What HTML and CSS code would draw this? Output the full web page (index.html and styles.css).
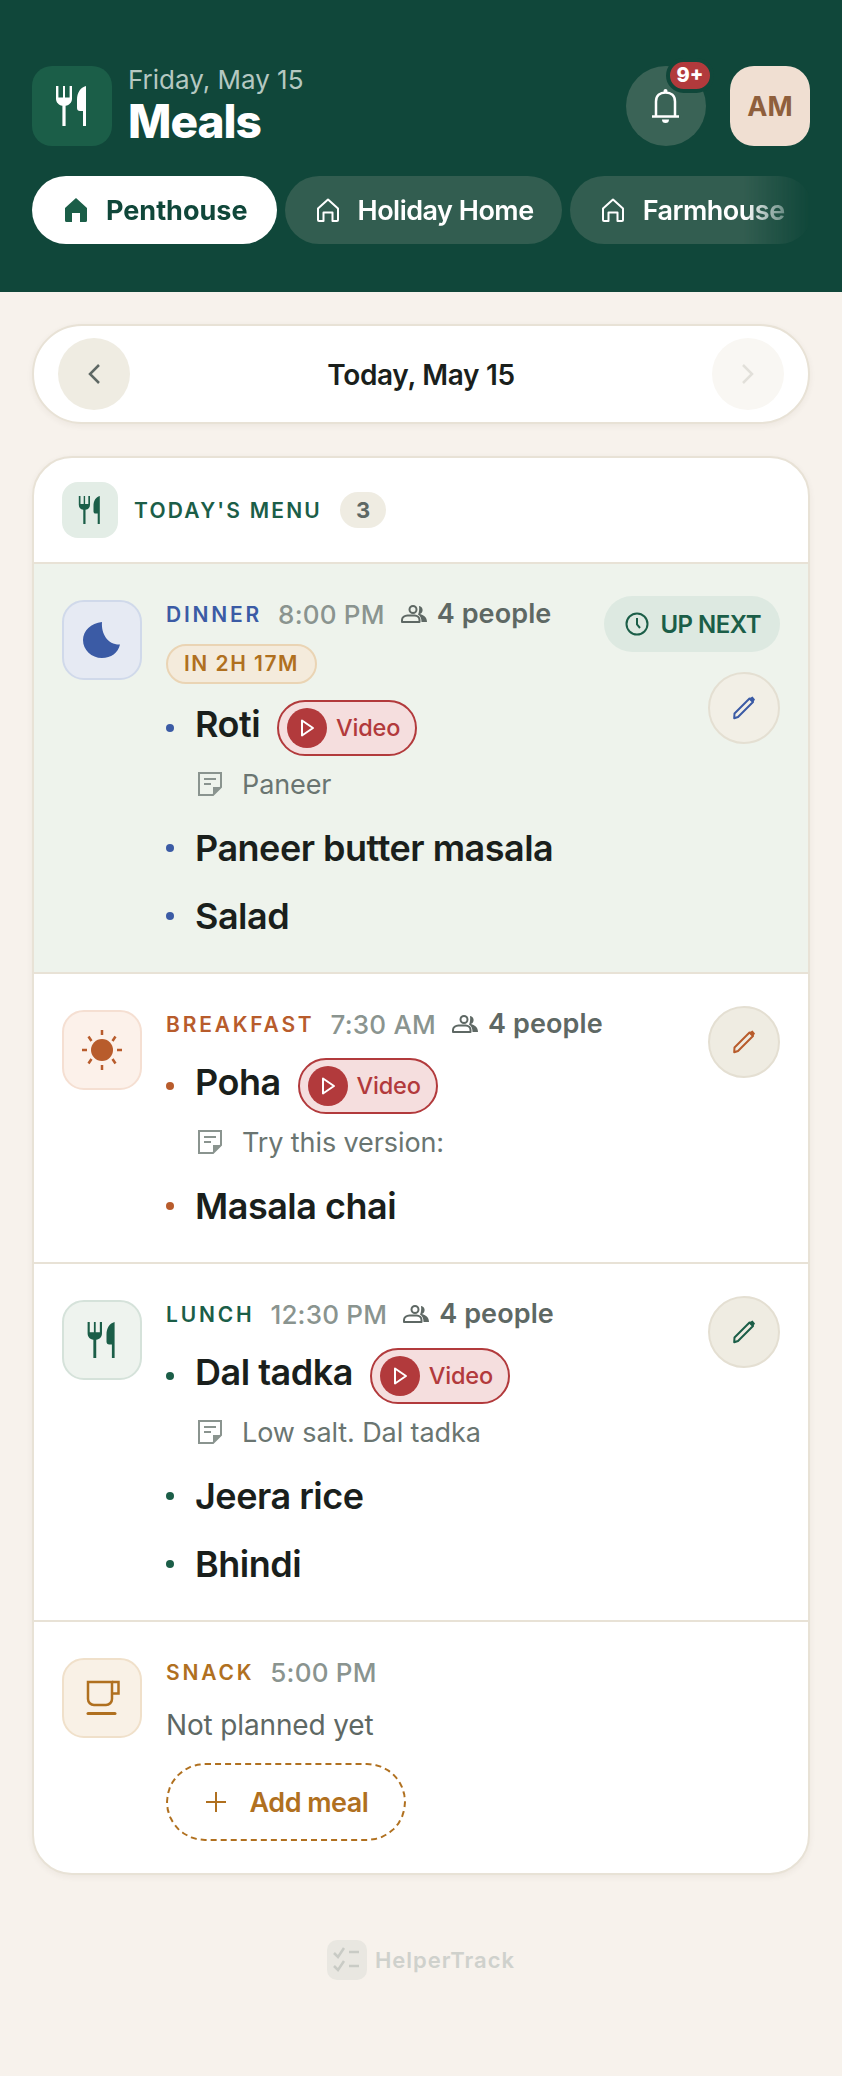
FILE: index.html
```html
<!DOCTYPE html>
<html lang="en">

<head>
    <meta charset="UTF-8">
    <meta name="viewport" content="width=device-width, initial-scale=1.0">
    <title>Meals</title>
    <link rel="stylesheet" href="styles.css">
</head>

<body>

    <!-- ICON SPRITE -->
    <svg class="sprite" xmlns="http://www.w3.org/2000/svg">
        <symbol id="i-cutlery" viewBox="0 0 40 40">
            <path fill="currentColor" d="M4 0h2.4v11.5H11V0h2v11.5h4.6V0H20v12.5c0 4-2.6 6.6-6.4 7.2V40h-3.2V19.7C6.600 19.100 4 16.500 4 12.500zM34 0v40h-3V25h-3c-1.900 0-3-1.200-3-3v-8C25 6.500 28.500 1.500 34 0z" />
        </symbol>
        <symbol id="i-home" viewBox="0 0 24 24">
            <path fill="none" stroke="currentColor" stroke-width="2" stroke-linejoin="round" d="M2 10.500 12 1.500l10 9V22a1 1 0 0 1-1 1h-4.500v-8.500h-9V23H3a1 1 0 0 1-1-1z" />
        </symbol>
        <symbol id="i-home-fill" viewBox="0 0 24 24">
            <path fill="currentColor" d="M1 10 12 0l11 10v12.500a1.500 1.500 0 0 1-1.500 1.500H16v-9H8v9H2.500A1.500 1.500 0 0 1 1 22.500z" />
        </symbol>
        <symbol id="i-pencil" viewBox="0 0 24 24">
            <path fill="none" stroke="currentColor" stroke-width="2" stroke-linejoin="round" d="M2.500 17.500 17.500 2.500l3.500 3.500-15 15-3.800 1.200z" />
            <path fill="currentColor" d="M17 2.500 20.500 .5 23 3.500 21 6.500z" />
        </symbol>
        <symbol id="i-people" viewBox="0 0 26 18">
            <circle cx="12" cy="4.500" r="3.500" fill="none" stroke="currentColor" stroke-width="2" />
            <path fill="none" stroke="currentColor" stroke-width="2" stroke-linejoin="round" d="M1 17v-2c0-2.500 2.500-4.500 5.500-4.500h7c3 0 5 2 5 4.500v2z" />
            <path fill="currentColor" d="M18 1c3 .5 4 3 3.500 5-.3 1.500-1.300 2.500-2.500 3 3.500 1 7 3 7 8h-5.500c0-3.500-1-6-3.500-7.500C18 8 18.500 4 18 1z" />
        </symbol>
        <symbol id="i-play" viewBox="0 0 40 40">
            <circle cx="20" cy="20" r="20" fill="#b23a3c" />
            <path fill="none" stroke="#fff" stroke-width="2" stroke-linejoin="round" d="M15 12.500 26 20l-11 7.500z" />
        </symbol>
        <symbol id="i-note" viewBox="0 0 24 24">
            <path fill="none" stroke="currentColor" stroke-width="2" d="M1 1h22v14l-8 8H1z" />
            <path fill="none" stroke="currentColor" stroke-width="2" d="M6 7h12M6 12h7" />
            <path fill="currentColor" d="M15 15h8l-8 8z" />
        </symbol>
    </svg>

    <header class="top">
        <div class="top-row">
            <div class="brand-icon"><svg class="icon-40"><use href="#i-cutlery" /></svg></div>
            <div class="title-block">
                <div class="title-date">Friday, May 15</div>
                <h1>Meals</h1>
            </div>
            <button class="bell">
                <svg class="icon-40" viewBox="0 0 40 40" fill="none" stroke="currentColor" stroke-width="2.500">
                    <path d="M10 30V15.500C10 9.500 14 6.500 19.500 6.500S29 9.500 29 15.500V30" />
                    <path d="M6 30.500h27" />
                    <circle cx="19.500" cy="5" r="2" fill="currentColor" stroke="none" />
                    <path d="M16 33.500h7a3.500 3.500 0 0 1-7 0z" fill="currentColor" stroke="none" />
                </svg>
                <span class="bell-badge">9+</span>
            </button>
            <div class="avatar">AM</div>
        </div>

        <div class="places">
            <div class="place active"><svg class="icon-home"><use href="#i-home-fill" /></svg>Penthouse</div>
            <div class="place"><svg class="icon-home"><use href="#i-home" /></svg>Holiday Home</div>
            <div class="place"><svg class="icon-home"><use href="#i-home" /></svg>Farmhouse</div>
        </div>
    </header>

    <main class="page">

        <!-- Date switcher -->
        <div class="date-bar">
            <button class="nav-btn">
                <svg width="14" height="20" viewBox="0 0 14 20" fill="none" stroke="currentColor" stroke-width="2.500"><path d="M12 1 3 10l9 9" /></svg>
            </button>
            <div class="date-label">Today, May 15</div>
            <button class="nav-btn off">
                <svg width="14" height="20" viewBox="0 0 14 20" fill="none" stroke="currentColor" stroke-width="2.500"><path d="M2 1l9 9-9 9" /></svg>
            </button>
        </div>

        <section class="card">
            <div class="card-head">
                <div class="head-icon"><svg class="icon-28"><use href="#i-cutlery" /></svg></div>
                <span class="head-title">TODAY'S MENU</span>
                <span class="head-count">3</span>
            </div>

            <!-- Dinner -->
            <article class="meal dinner next">
                <div class="meal-icon">
                    <svg class="icon-40" viewBox="0 0 40 40"><path fill="currentColor" d="M20 2C19 14 26 25 38 24.500 36 33 29 38 20 38 9.500 38 1 30 1 20 1 11 9 3 20 2z" /></svg>
                </div>
                <div class="meal-main">
                    <div class="meta">
                        <span class="meal-name">DINNER</span>
                        <span class="meal-time">8:00 PM</span>
                        <span class="meal-people"><svg class="icon-people"><use href="#i-people" /></svg>4 people</span>
                        <span class="countdown">IN 2H 17M</span>
                    </div>
                    <ul class="dishes">
                        <li>
                            <div class="dish">Roti <a class="video"><svg class="icon-play"><use href="#i-play" /></svg>Video</a></div>
                            <div class="note"><svg class="icon-note"><use href="#i-note" /></svg>Paneer</div>
                        </li>
                        <li><div class="dish">Paneer butter masala</div></li>
                        <li><div class="dish">Salad</div></li>
                    </ul>
                </div>
                <div class="meal-side">
                    <span class="up-next">
                        <svg width="24" height="24" viewBox="0 0 24 24" fill="none" stroke="currentColor" stroke-width="2"><circle cx="12" cy="12" r="10.500" /><path d="M12 6v6.500l3 3.500" /></svg>
                        UP NEXT
                    </span>
                    <button class="edit-btn"><svg class="icon-pencil"><use href="#i-pencil" /></svg></button>
                </div>
            </article>

            <!-- Breakfast -->
            <article class="meal breakfast">
                <div class="meal-icon">
                    <svg class="icon-40" viewBox="0 0 40 40" fill="none" stroke="currentColor" stroke-width="2.500">
                        <circle cx="20" cy="20" r="11" fill="currentColor" stroke="none" />
                        <path d="M20 0v5M20 35v5M0 20h5M35 20h5M6.500 6.500l3 4.500M33.500 6.500l-3 4.500M6.500 33.500l3-4.500M33.500 33.500l-3-4.500" />
                    </svg>
                </div>
                <div class="meal-main">
                    <div class="meta">
                        <span class="meal-name">BREAKFAST</span>
                        <span class="meal-time">7:30 AM</span>
                        <span class="meal-people"><svg class="icon-people"><use href="#i-people" /></svg>4 people</span>
                    </div>
                    <ul class="dishes">
                        <li>
                            <div class="dish">Poha <a class="video"><svg class="icon-play"><use href="#i-play" /></svg>Video</a></div>
                            <div class="note"><svg class="icon-note"><use href="#i-note" /></svg>Try this version:</div>
                        </li>
                        <li><div class="dish">Masala chai</div></li>
                    </ul>
                </div>
                <div class="meal-side">
                    <button class="edit-btn"><svg class="icon-pencil"><use href="#i-pencil" /></svg></button>
                </div>
            </article>

            <!-- Lunch -->
            <article class="meal lunch">
                <div class="meal-icon"><svg class="icon-36"><use href="#i-cutlery" /></svg></div>
                <div class="meal-main">
                    <div class="meta">
                        <span class="meal-name">LUNCH</span>
                        <span class="meal-time">12:30 PM</span>
                        <span class="meal-people"><svg class="icon-people"><use href="#i-people" /></svg>4 people</span>
                    </div>
                    <ul class="dishes">
                        <li>
                            <div class="dish">Dal tadka <a class="video"><svg class="icon-play"><use href="#i-play" /></svg>Video</a></div>
                            <div class="note"><svg class="icon-note"><use href="#i-note" /></svg>Low salt. Dal tadka</div>
                        </li>
                        <li><div class="dish">Jeera rice</div></li>
                        <li><div class="dish">Bhindi</div></li>
                    </ul>
                </div>
                <div class="meal-side">
                    <button class="edit-btn"><svg class="icon-pencil"><use href="#i-pencil" /></svg></button>
                </div>
            </article>

            <!-- Snack -->
            <article class="meal snack">
                <div class="meal-icon">
                    <svg class="icon-40" viewBox="0 0 40 40" fill="none" stroke="currentColor" stroke-width="2.500">
                        <path d="M6 4h24v17a6 6 0 0 1-6 6H12a6 6 0 0 1-6-6z" />
                        <path d="M30 4h6.500v11.500H30" />
                        <path d="M6 35.500h27" stroke-width="3" stroke-linecap="round" />
                    </svg>
                </div>
                <div class="meal-main">
                    <div class="meta">
                        <span class="meal-name">SNACK</span>
                        <span class="meal-time">5:00 PM</span>
                    </div>
                    <div class="empty-text">Not planned yet</div>
                    <button class="add-meal">
                        <svg width="24" height="24" viewBox="0 0 24 24" fill="none" stroke="currentColor" stroke-width="2"><path d="M12 2v20M2 12h20" /></svg>
                        Add meal
                    </button>
                </div>
            </article>
        </section>

        <footer class="foot">
            <div class="foot-logo">
                <svg width="28" height="28" viewBox="0 0 28 28" fill="none" stroke="currentColor" stroke-width="2.500">
                    <path d="M1 7l4 4 6-9M16 6h10M1 20l4 4 6-9M16 20h10" />
                </svg>
            </div>
            <span>HelperTrack</span>
        </footer>
    </main>

</body>

</html>
```

FILE: styles.css
```css
* {
    box-sizing: border-box;
}

body {
    font-family: Inter, "Noto Sans", sans-serif;
    background-color: #f7f2ec;
    color: #1a1f1c;
    margin: 0;
    padding: 0;
}

button {
    font-family: inherit;
    padding: 0;
    cursor: pointer;
}

.sprite {
    display: none;
}

.icon-40 { width: 40px; height: 40px; }
.icon-36 { width: 36px; height: 36px; }
.icon-28 { width: 28px; height: 28px; }

/* Header */
.top {
    background-color: #10473a;
    color: white;
    padding: 66px 0 48px 32px;
}

.top-row {
    display: flex;
    align-items: center;
    padding-right: 32px;
}

.brand-icon {
    width: 80px;
    height: 80px;
    border-radius: 20px;
    background-color: #1b5e48;
    display: flex;
    align-items: center;
    justify-content: center;
}

.title-block {
    flex: 1;
    height: 80px;
    margin-left: 16px;
}

.title-date {
    font-size: 26px;
    line-height: 28px;
    font-weight: 400;
    color: #b5c8c1;
}

h1 {
    margin: 0;
    padding-top: 2px;
    font-size: 46px;
    line-height: 50px;
    font-weight: 800;
    letter-spacing: -1px;
}

.bell {
    position: relative;
    width: 80px;
    height: 80px;
    border: none;
    border-radius: 50%;
    background-color: #3a6356;
    color: white;
    display: flex;
    align-items: center;
    justify-content: center;
}

.bell-badge {
    position: absolute;
    top: -8px;
    right: -8px;
    height: 35px;
    min-width: 48px;
    padding: 0 4px;
    border: 4px solid #10473a;
    border-radius: 18px;
    background-color: #b23a3c;
    color: white;
    font-size: 20px;
    line-height: 27px;
    font-weight: 800;
    text-align: center;
}

.avatar {
    width: 80px;
    height: 80px;
    margin-left: 24px;
    border-radius: 24px;
    background-color: #f0dfd2;
    color: #8f5f3c;
    font-size: 27px;
    font-weight: 700;
    display: flex;
    align-items: center;
    justify-content: center;
}

.places {
    display: flex;
    gap: 8px;
    margin-top: 30px;
    margin-right: 32px;
    overflow: hidden;
    -webkit-mask-image: linear-gradient(to right, black calc(100% - 66px), transparent 100%);
    mask-image: linear-gradient(to right, black calc(100% - 66px), transparent 100%);
}

.place {
    flex-shrink: 0;
    height: 68px;
    padding: 0 28px 0 31px;
    border-radius: 34px;
    background-color: #325d50;
    font-size: 27px;
    font-weight: 600;
    letter-spacing: -0.5px;
    display: flex;
    align-items: center;
    gap: 18px;
}

.place.active {
    padding: 0 29px 0 32px;
    background-color: white;
    color: #10473a;
    font-weight: 700;
    letter-spacing: 0;
}

.icon-home {
    width: 24px;
    height: 24px;
}

.place.active .icon-home {
    color: #1b5e48;
}

/* Page */
.page {
    padding: 32px 32px 0;
}

.date-bar {
    height: 100px;
    padding: 12px 24px;
    border: 2px solid #e8e2d6;
    border-radius: 50px;
    background-color: white;
    box-shadow: 0 2px 6px rgba(60, 50, 30, 0.06);
    display: flex;
    align-items: center;
    justify-content: space-between;
}

.date-label {
    padding-top: 2px;
    font-size: 28px;
    font-weight: 600;
    letter-spacing: -0.3px;
}

.nav-btn {
    width: 72px;
    height: 72px;
    border: none;
    border-radius: 50%;
    background-color: #efece2;
    color: #5e6864;
    display: flex;
    align-items: center;
    justify-content: center;
}

.nav-btn.off {
    background-color: #f9f7f3;
    color: #e2e0da;
}

.card {
    margin-top: 32px;
    border: 2px solid #e8e2d6;
    border-radius: 40px;
    background-color: white;
    box-shadow: 0 2px 6px rgba(60, 50, 30, 0.06);
    overflow: hidden;
}

.card-head {
    padding: 24px 28px;
    border-bottom: 2px solid #e8e2d6;
    display: flex;
    align-items: center;
}

.head-icon {
    width: 56px;
    height: 56px;
    border-radius: 16px;
    background-color: #e3ede6;
    color: #1b5e48;
    display: flex;
    align-items: center;
    justify-content: center;
}

.head-title {
    margin-left: 16px;
    font-size: 21px;
    font-weight: 600;
    letter-spacing: 2.2px;
    color: #1b5e48;
}

.head-count {
    width: 46px;
    height: 36px;
    margin-left: 18px;
    border-radius: 18px;
    background-color: #efece2;
    color: #5e6864;
    font-size: 22px;
    font-weight: 700;
    line-height: 36px;
    text-align: center;
}

/* Meal rows */
.meal {
    --accent: #1b5e48;
    --icon-bg: #eef3ee;
    --icon-line: #d5e2da;
    padding: 32px 28px;
    border-bottom: 2px solid #e8e2d6;
    display: flex;
    gap: 24px;
}

.meal:last-child {
    border-bottom: none;
}

.meal.next {
    background-color: #eef3ec;
}

.meal.dinner {
    --accent: #3b5ba5;
    --icon-bg: #e6eaf3;
    --icon-line: #d0d9ea;
}

.meal.breakfast {
    --accent: #b85c2c;
    --icon-bg: #fcf1ea;
    --icon-line: #f5dfd2;
}

.meal.snack {
    --accent: #b0701f;
    --icon-bg: #f9f1e6;
    --icon-line: #f0e0ca;
}

.meal-icon {
    flex-shrink: 0;
    width: 80px;
    height: 80px;
    margin-top: 4px;
    border: 2px solid var(--icon-line);
    border-radius: 22px;
    background-color: var(--icon-bg);
    color: var(--accent);
    display: flex;
    align-items: center;
    justify-content: center;
}

.meal-main {
    flex: 1;
    min-width: 0;
}

.meal-side {
    display: flex;
    flex-direction: column;
    align-items: flex-end;
    gap: 20px;
}

.meta {
    display: flex;
    flex-wrap: wrap;
    align-items: center;
    column-gap: 16px;
    row-gap: 12px;
}

.meta > span {
    height: 36px;
    line-height: 38px;
}

.meal-name {
    font-size: 21px;
    font-weight: 600;
    letter-spacing: 2.8px;
    color: var(--accent);
}

.meal-time {
    font-size: 26px;
    font-weight: 500;
    letter-spacing: 0.2px;
    color: #8a948f;
}

.meal-people {
    font-size: 27px;
    font-weight: 600;
    letter-spacing: 0.1px;
    color: #5e6864;
    display: flex;
    align-items: center;
    gap: 10px;
}

.icon-people {
    width: 26px;
    height: 18px;
}

.meta > .countdown {
    height: 40px;
    padding: 0 16px;
    border: 2px solid #ead4b4;
    border-radius: 20px;
    background-color: #f4ebdc;
    color: #b0701f;
    font-size: 21px;
    font-weight: 600;
    letter-spacing: 1.5px;
    line-height: 36px;
}

.dishes {
    list-style: none;
    margin: 16px 0 0;
    padding: 0;
    display: flex;
    flex-direction: column;
    gap: 20px;
}

.dish {
    position: relative;
    min-height: 48px;
    padding-left: 29px;
    font-size: 36px;
    font-weight: 600;
    letter-spacing: -0.5px;
    line-height: 48px;
    display: flex;
    align-items: flex-start;
    gap: 17px;
}

/* the coloured list bullet */
.dish::before {
    content: "";
    position: absolute;
    left: 0;
    top: calc(50% - 4px);
    width: 8px;
    height: 8px;
    border-radius: 50%;
    background-color: var(--accent);
}

.video {
    height: 56px;
    padding: 0 15px 0 8px;
    border: 2px solid #b23a3c;
    border-radius: 28px;
    background-color: #f5dede;
    color: #b23a3c;
    font-size: 23.5px;
    font-weight: 500;
    letter-spacing: -0.2px;
    display: flex;
    align-items: center;
    gap: 9px;
}

.icon-play {
    width: 40px;
    height: 40px;
}

.note {
    margin-top: 8px;
    height: 40px;
    padding-left: 32px;
    font-size: 27px;
    font-weight: 400;
    letter-spacing: -0.1px;
    color: #6a7571;
    display: flex;
    align-items: center;
    gap: 20px;
}

.icon-note {
    width: 24px;
    height: 24px;
    color: #8a948f;
}

.up-next {
    height: 56px;
    padding: 0 19px 0 21px;
    border-radius: 28px;
    background-color: #dde9e1;
    color: #1b5e48;
    font-size: 24px;
    font-weight: 600;
    letter-spacing: -0.5px;
    white-space: nowrap;
    display: flex;
    align-items: center;
    gap: 11px;
}

.edit-btn {
    width: 72px;
    height: 72px;
    border: 2px solid #e4dfd2;
    border-radius: 50%;
    background-color: #efece2;
    color: var(--accent);
    display: flex;
    align-items: center;
    justify-content: center;
}

.next .edit-btn {
    background-color: #f2efe6;
}

.icon-pencil {
    width: 24px;
    height: 24px;
}

.empty-text {
    margin-top: 16px;
    font-size: 28px;
    line-height: 39px;
    font-weight: 400;
    letter-spacing: -0.15px;
    color: #5e6864;
}

.add-meal {
    width: 240px;
    height: 78px;
    margin-top: 18px;
    border: 2px dashed #b0701f;
    border-radius: 39px;
    background: none;
    color: #b0701f;
    font-size: 27px;
    font-weight: 600;
    letter-spacing: -0.5px;
    display: flex;
    align-items: center;
    justify-content: center;
    gap: 22px;
}

/* Footer */
.foot {
    margin-top: 65px;
    display: flex;
    align-items: center;
    justify-content: center;
    gap: 8px;
    color: #cfd1cc;
    font-size: 22px;
    font-weight: 600;
    letter-spacing: 1px;
}

.foot-logo {
    width: 40px;
    height: 40px;
    border-radius: 10px;
    background-color: #e9e7e1;
    color: #c9cbc5;
    display: flex;
    align-items: center;
    justify-content: center;
}
```
